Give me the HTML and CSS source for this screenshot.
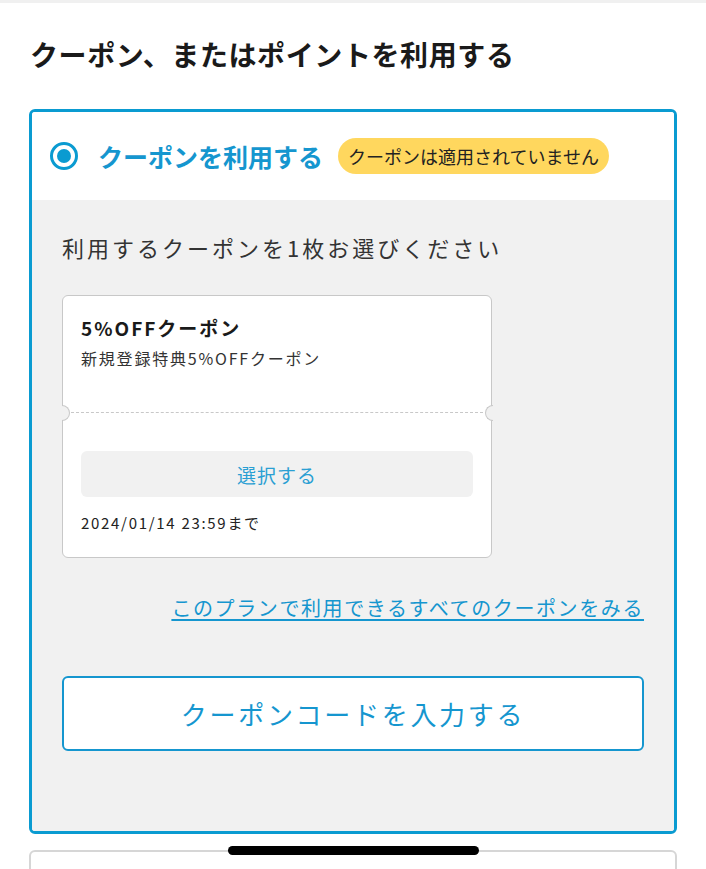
FILE: index.html
```html
<!DOCTYPE html>
<html lang="ja">
<head>
<meta charset="utf-8">
<link rel="stylesheet" href="styles.css">
</head>
<body>
<div class="topbar"></div>
<main class="page">
  <h1 class="title">クーポン、またはポイントを利用する</h1>
  <section class="panel">
    <div class="panel-head">
      <span class="radio"><span class="radio-dot"></span></span>
      <span class="head-label">クーポンを利用する</span>
      <span class="badge">クーポンは適用されていません</span>
    </div>
    <div class="panel-body">
      <p class="lead">利用するクーポンを1枚お選びください</p>
      <div class="coupon">
        <div class="coupon-top">
          <div class="coupon-name">5%OFFクーポン</div>
          <div class="coupon-desc">新規登録特典5%OFFクーポン</div>
        </div>
        <div class="coupon-cut">
          <span class="notch notch-left"></span>
          <span class="dash"></span>
          <span class="notch notch-right"></span>
        </div>
        <div class="coupon-bottom">
          <button class="select-btn">選択する</button>
          <div class="coupon-date">2024/01/14 23:59まで</div>
        </div>
      </div>
      <div class="link-row"><a class="all-link" href="#">このプランで利用できるすべてのクーポンをみる</a></div>
      <button class="code-btn">クーポンコードを入力する</button>
    </div>
  </section>
  <section class="panel-next"></section>
</main>
<div class="home-indicator"></div>
</body>
</html>
```
FILE: styles.css
```css
* { box-sizing: border-box; }
html, body { margin: 0; padding: 0; }
body {
  width: 706px;
  height: 869px;
  overflow: hidden;
  background: #fff;
  font-family: "Noto Sans CJK JP", "Noto Sans", sans-serif;
  color: #222;
  position: relative;
}
.topbar { height: 3px; background: #f0f0f0; }
.page { padding: 0 29px; }
.title {
  margin: 0;
  padding: 33px 0 0 1px;
  height: 106px;
  font-size: 28px;
  font-weight: 700;
  line-height: 36px;
  letter-spacing: 0.6px;
  color: #1a1a1a;
}
.panel {
  border: 3px solid #0a9bd1;
  border-radius: 6px;
  overflow: hidden;
}
.panel-head {
  height: 88px;
  background: #fff;
  display: flex;
  align-items: center;
  padding-left: 18px;
}
.radio {
  width: 28px;
  height: 28px;
  border: 3.5px solid #0a9bd1;
  border-radius: 50%;
  display: flex;
  align-items: center;
  justify-content: center;
  flex: none;
}
.radio-dot {
  width: 14px;
  height: 14px;
  border-radius: 50%;
  background: #0a9bd1;
}
.head-label {
  margin-left: 20px;
  font-size: 25px;
  font-weight: 700;
  color: #1596cf;
}
.badge {
  margin-left: 15px;
  height: 36px;
  padding: 0 10px;
  border-radius: 18px;
  background: #ffd75e;
  font-size: 18px;
  line-height: 36px;
  color: #222;
}
.panel-body {
  background: #f1f1f1;
  padding: 30px 30px 80px 30px;
}
.lead {
  margin: 0;
  font-size: 22px;
  line-height: 34px;
  letter-spacing: 3px;
  color: #333;
}
.coupon {
  margin-top: 31px;
  width: 430px;
  background: #fff;
  border: 1.5px solid #c8c8c8;
  border-radius: 6px;
  position: relative;
}
.coupon-top { padding: 17px 18px 0 18px; height: 116px; }
.coupon-name {
  font-size: 19px;
  font-weight: 700;
  line-height: 30px;
  letter-spacing: 2px;
  color: #1a1a1a;
}
.coupon-desc {
  font-size: 16px;
  line-height: 24px;
  margin-top: 3px;
  letter-spacing: 1.8px;
  color: #333;
}
.coupon-cut { position: relative; height: 2px; }
.dash {
  display: block;
  margin: 0 8px;
  border-top: 1.5px dashed #c8c8c8;
}
.notch {
  position: absolute;
  top: -7px;
  width: 8px;
  height: 16px;
  background: #f1f1f1;
  border: 1.5px solid #c8c8c8;
}
.notch-left {
  left: -1.5px;
  border-left: none;
  border-radius: 0 8px 8px 0;
}
.notch-right {
  right: -1.5px;
  border-right: none;
  border-radius: 8px 0 0 8px;
}
.coupon-bottom { padding: 37px 18px 23px 18px; }
.select-btn {
  display: block;
  width: 100%;
  height: 46px;
  border: none;
  border-radius: 6px;
  background: #f1f1f1;
  font-family: inherit;
  font-size: 19px;
  color: #2a9fd3;
  letter-spacing: 1px;
  padding: 0;
}
.coupon-date {
  margin-top: 15px;
  font-size: 15px;
  line-height: 22px;
  letter-spacing: 1.7px;
  color: #222;
}
.link-row {
  margin-top: 36px;
  display: flex;
  justify-content: flex-end;
}
.all-link {
  font-size: 20px;
  line-height: 28px;
  letter-spacing: 1.6px;
  color: #1596cf;
  text-decoration: underline;
  text-underline-offset: 3px;
}
.code-btn {
  display: block;
  margin-top: 54px;
  width: 100%;
  height: 75px;
  background: #fff;
  border: 2px solid #1596cf;
  border-radius: 6px;
  font-family: inherit;
  font-size: 26px;
  color: #1596cf;
  letter-spacing: 2.7px;
  padding: 0;
}
.panel-next {
  margin-top: 16px;
  height: 60px;
  border: 2px solid #d6d6d6;
  border-radius: 6px;
}
.home-indicator {
  position: absolute;
  left: 228px;
  top: 846px;
  width: 251px;
  height: 9px;
  border-radius: 5px;
  background: #000;
}
```
